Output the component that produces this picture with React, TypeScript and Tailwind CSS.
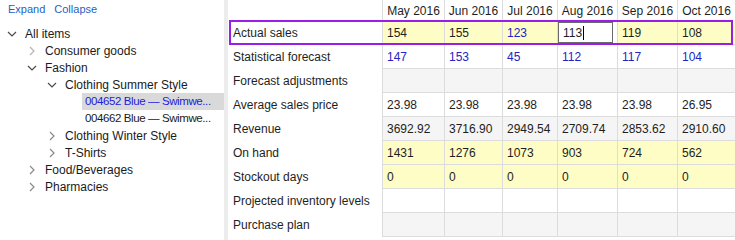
import type { ReactNode } from "react";

type Cell = { v: string; blue?: boolean };
type Row = { label: string; bg: string; cells: Cell[] };

const months = ["May 2016", "Jun 2016", "Jul 2016", "Aug 2016", "Sep 2016", "Oct 2016"];
const widths = ["w-[62px]", "w-[58px]", "w-[55px]", "w-[60px]", "w-[60px]", "w-[58px]"];

const c = (...vals: string[]): Cell[] => vals.map((v) => ({ v }));
const blue = (...vals: string[]): Cell[] => vals.map((v) => ({ v, blue: true }));

const rows: Row[] = [
  {
    label: "Actual sales",
    bg: "bg-[#fffdc6]",
    cells: [{ v: "154" }, { v: "155" }, { v: "123", blue: true }, { v: "113" }, { v: "119" }, { v: "108" }],
  },
  { label: "Statistical forecast", bg: "bg-white", cells: blue("147", "153", "45", "112", "117", "104") },
  { label: "Forecast adjustments", bg: "bg-[#f5f5f5]", cells: c("", "", "", "", "", "") },
  { label: "Average sales price", bg: "bg-white", cells: c("23.98", "23.98", "23.98", "23.98", "23.98", "26.95") },
  { label: "Revenue", bg: "bg-[#f5f5f5]", cells: c("3692.92", "3716.90", "2949.54", "2709.74", "2853.62", "2910.60") },
  { label: "On hand", bg: "bg-[#fffdc6]", cells: c("1431", "1276", "1073", "903", "724", "562") },
  { label: "Stockout days", bg: "bg-[#fffdc6]", cells: c("0", "0", "0", "0", "0", "0") },
  { label: "Projected inventory levels", bg: "bg-white", cells: c("", "", "", "", "", "") },
  { label: "Purchase plan", bg: "bg-[#f5f5f5]", cells: c("", "", "", "", "", "") },
];

function ChevronDown() {
  return (
    <svg viewBox="0 0 10 10" className="h-[10px] w-[10px]" fill="none">
      <polyline points="1,3 5,7 9,3" stroke="#4a4a4a" strokeWidth="1.2" />
    </svg>
  );
}

function ChevronRight({ light }: { light?: boolean }) {
  return (
    <svg viewBox="0 0 10 10" className="h-[10px] w-[10px]" fill="none">
      <polyline points="3,1 7,5 3,9" stroke={light ? "#b4b4b4" : "#8a8a8a"} strokeWidth="1.2" />
    </svg>
  );
}

function Node({ level, icon, children }: { level: number; icon: ReactNode; children: ReactNode }) {
  const pad = ["pl-[7px]", "pl-[27px]", "pl-[47px]"][level];
  return (
    <div className={`flex h-[17px] items-center ${pad}`}>
      <span className="flex w-[18px] shrink-0 items-center">{icon}</span>
      <span className="whitespace-nowrap">{children}</span>
    </div>
  );
}

// leaf items: the long item names are cut off with dots, as in the source
function Leaf({ selected, children }: { selected?: boolean; children: ReactNode }) {
  return (
    <div
      className={`ml-[82px] flex h-[17px] items-center whitespace-nowrap pl-[3px] text-[11.5px] tracking-[-0.4px] ${
        selected ? "bg-[#d9d9d9] text-[#1c1cde]" : ""
      }`}
    >
      {children}
    </div>
  );
}

function Tree() {
  return (
    <aside className="w-[224px] shrink-0 text-[12px] text-[#1a1a1a]">
      <div className="flex h-[19px] items-center gap-[9px] pl-[8px] text-[11px] text-[#1f5fc4]">
        <span>Expand</span>
        <span>Collapse</span>
      </div>
      <div className="mt-[6px]">
        <Node level={0} icon={<ChevronDown />}>All items</Node>
        <Node level={1} icon={<ChevronRight light />}>Consumer goods</Node>
        <Node level={1} icon={<ChevronDown />}>Fashion</Node>
        <Node level={2} icon={<ChevronDown />}>Clothing Summer Style</Node>
        <Leaf selected>004652 Blue — Swimwe...</Leaf>
        <Leaf>004662 Blue — Swimwe...</Leaf>
        <Node level={2} icon={<ChevronRight />}>Clothing Winter Style</Node>
        <Node level={2} icon={<ChevronRight />}>T-Shirts</Node>
        <Node level={1} icon={<ChevronRight />}>Food/Beverages</Node>
        <Node level={1} icon={<ChevronRight />}>Pharmacies</Node>
      </div>
    </aside>
  );
}

function Grid() {
  return (
    <div className="relative ml-px flex-1 text-[12px] text-[#1e1e1e]">
      <div className="flex h-[21px]">
        <div className="w-[153px] shrink-0" />
        {months.map((m, i) => (
          <div
            key={m}
            className={`${widths[i]} flex shrink-0 items-center justify-center border-l border-[#dcdcdc] whitespace-nowrap`}
          >
            {m}
          </div>
        ))}
      </div>
      {rows.map((r, ri) => (
        <div key={r.label} className="flex h-[24px]">
          <div className="flex w-[153px] shrink-0 items-center pl-[4px] whitespace-nowrap">{r.label}</div>
          {r.cells.map((cell, i) => {
            const editing = ri === 0 && i === 3;
            return (
              <div
                key={i}
                className={`${widths[i]} flex shrink-0 items-center border-b border-l border-[#dcdcdc] pl-[4px] ${
                  editing ? "bg-white" : r.bg
                } ${cell.blue ? "text-[#2424c4]" : ""}`}
              >
                {editing ? (
                  <div className="-ml-[4px] flex h-[21px] w-full items-center border border-[#6a6a6a] pl-[4px]">
                    {cell.v}
                    <span className="ml-px h-[14px] w-px bg-black" />
                  </div>
                ) : (
                  cell.v
                )}
              </div>
            );
          })}
        </div>
      ))}
      {/* selected row outline */}
      <div className="pointer-events-none absolute left-0 top-[20px] h-[25px] w-[504px] border-2 border-[#9a1ee8]" />
    </div>
  );
}

export default function App() {
  return (
    <div className="flex h-[240px] w-[735px] overflow-hidden bg-white font-['Liberation_Sans',sans-serif]">
      <Tree />
      <div className="w-[4px] shrink-0 bg-[#ececec]" />
      <Grid />
    </div>
  );
}
